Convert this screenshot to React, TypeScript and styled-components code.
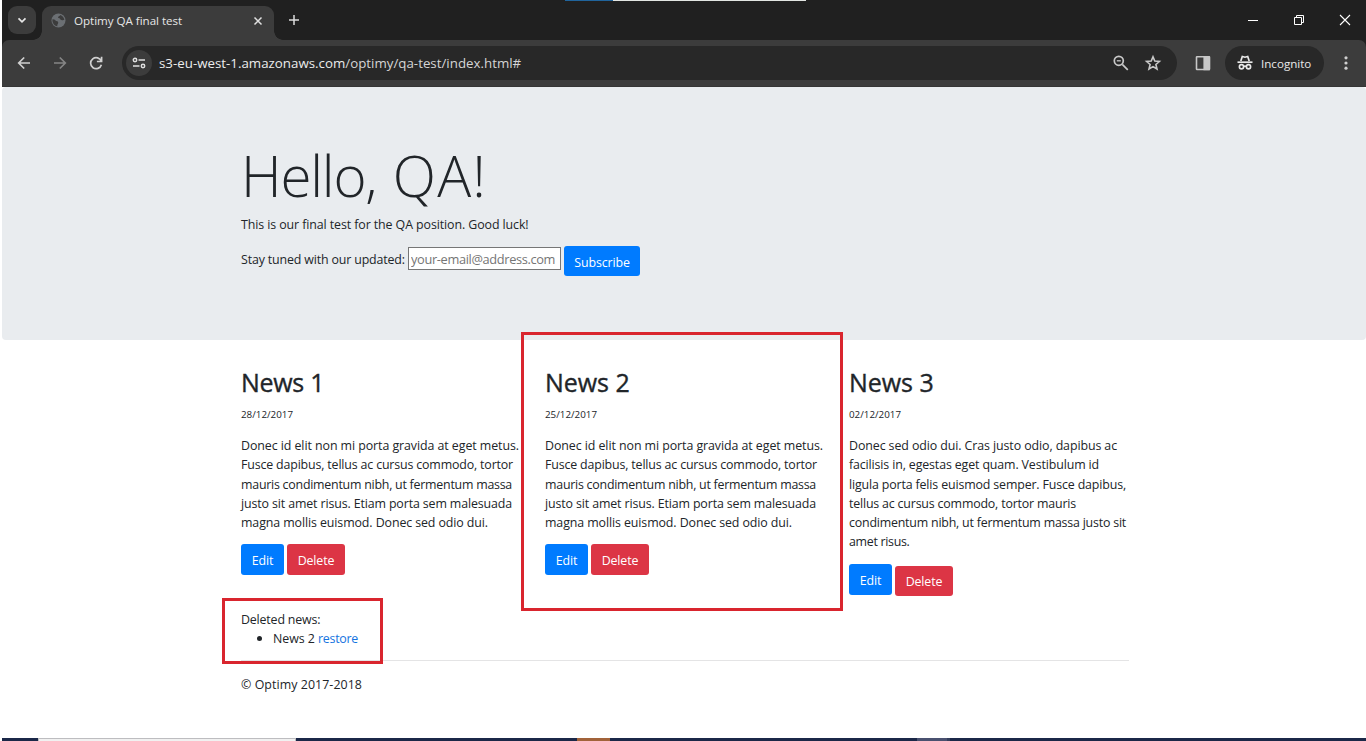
import React from "react";
import styled, { createGlobalStyle } from "styled-components";

const GlobalStyle = createGlobalStyle`
  *, *::before, *::after { box-sizing: border-box; }
  body { margin: 0; background: #fff; overflow: hidden; }
`;

const Screen = styled.div`
  position: relative;
  display: flex;
  flex-direction: column;
  width: 1366px;
  height: 741px;
  padding-left: 2px;
  overflow: hidden;
  background: #fff;
  color: #212529;
  font-family: "Segoe UI", "Open Sans", sans-serif;
  font-size: 12.4px;
`;

/* ---------- browser chrome ---------- */

const TabStrip = styled.header`
  position: relative;
  display: flex;
  flex: none;
  height: 40px;
  padding: 6px 0 0 6px;
  background: #202020;
`;

const BackgroundSliver = styled.div`
  position: absolute;
  top: 0;
  left: 563px;
  width: 241px;
  height: 1px;
  background: linear-gradient(to right, #20649c 48px, #e2e5e2 48px);
`;

const TabSearch = styled.div`
  display: grid;
  place-items: center;
  width: 28px;
  height: 28px;
  border-radius: 9px;
  background: #3c3c3c;
`;

const Tab = styled.div`
  position: relative;
  display: flex;
  align-items: center;
  width: 232px;
  height: 34px;
  margin-left: 6px;
  padding: 0 10px 5px 9px;
  border-radius: 9px 9px 0 0;
  background: #3c3c3c;
  color: #e6e6e6;

  &::before,
  &::after {
    content: "";
    position: absolute;
    bottom: 0;
    width: 9px;
    height: 9px;
  }
  &::before {
    left: -9px;
    background: radial-gradient(circle at 0 0, transparent 8.5px, #3c3c3c 9px);
  }
  &::after {
    right: -9px;
    background: radial-gradient(circle at 100% 0, transparent 8.5px, #3c3c3c 9px);
  }
`;

const TabTitle = styled.span`
  flex: 1;
  margin-left: 8px;
  font-size: 11.6px;
  line-height: 16px;
  letter-spacing: -0.03px;
  white-space: nowrap;
`;

const NewTab = styled.div`
  display: grid;
  place-items: center;
  width: 28px;
  height: 28px;
  margin-left: 6px;
`;

const WindowControls = styled.div`
  display: flex;
  flex: 1;
  justify-content: flex-end;
  align-items: center;
  height: 28px;
  gap: 30px;
  padding-right: 13px;
`;

const ToolbarBack = styled.div`
  flex: none;
  height: 47px;
  background: #202020;
`;

const Toolbar = styled.div`
  display: flex;
  align-items: center;
  height: 47px;
  padding: 0 10px 0 12px;
  border-radius: 7px 7px 0 0;
  border-bottom: 1px solid #353535;
  background: #3c3c3c;
`;

const NavIcons = styled.div`
  display: flex;
  gap: 16px;
  width: 108px;
`;

const Omnibox = styled.div`
  display: flex;
  align-items: center;
  width: 1055px;
  height: 34px;
  padding: 0 14px 0 4px;
  border-radius: 17px;
  background: #282828;
`;

const SiteInfo = styled.div`
  display: grid;
  place-items: center;
  width: 26px;
  height: 26px;
  border-radius: 50%;
  background: #3c3c3c;
`;

const Url = styled.span`
  flex: 1;
  margin-left: 7px;
  color: #d5d5d5;
  font-size: 13.3px;
  line-height: 20px;
  letter-spacing: 0.01px;
  white-space: nowrap;

  b {
    color: #ececec;
    font-weight: 400;
  }
`;

const OmniIcons = styled.div`
  display: flex;
  gap: 12px;
`;

const PanelIcon = styled.div`
  display: flex;
  width: 48px;
  padding-left: 16px;
`;

const Incognito = styled.div`
  display: flex;
  align-items: center;
  gap: 6px;
  width: 99px;
  height: 34px;
  padding-left: 10px;
  border-radius: 17px;
  background: #282828;
  color: #e8e8e8;
  font-size: 11.6px;
`;

const Menu = styled.div`
  display: flex;
  margin-left: 12px;
`;

/* ---------- web page ---------- */

const Jumbotron = styled.section`
  flex: none;
  height: 253px;
  padding: 54px 0 0 239px;
  border-radius: 4px;
  background: #e9ecef;
`;

const Display = styled.h1`
  margin: 0 0 4px;
  font-size: 56.5px;
  font-weight: 300;
  line-height: 70px;
  letter-spacing: 1.2px;
`;

const Greeting = styled.span`
  margin-right: 3px;
  letter-spacing: -1.2px;
`;

const Lead = styled.p`
  margin: 0 0 11px;
  line-height: 20px;
  letter-spacing: -0.09px;
`;

const SubscribeForm = styled.form`
  display: flex;
  height: 30px;
`;

const FormLabel = styled.label`
  width: 167px;
  line-height: 28px;
  letter-spacing: -0.15px;
`;

const EmailInput = styled.input`
  width: 153px;
  height: 23px;
  margin: 1px 3px 0 0;
  padding: 1px 2px 0;
  border: 1px solid #767676;
  border-radius: 0;
  background: #fff;
  font: 12.8px "Segoe UI", "Open Sans", sans-serif;
  letter-spacing: -0.35px;

  &::placeholder {
    color: #757575;
    opacity: 1;
  }
`;

const Button = styled.button<{ $tone: "primary" | "danger"; $width: number; $height?: number; $drop?: number }>`
  width: ${(p) => p.$width}px;
  height: ${(p) => p.$height ?? 31}px;
  margin: ${(p) => p.$drop ?? 0}px 0 0;
  padding: 2px 0 0;
  border: 0;
  border-radius: 3px;
  background: ${(p) => (p.$tone === "primary" ? "#007bff" : "#dc3545")};
  color: #fff;
  font: 12.4px "Segoe UI", "Open Sans", sans-serif;
  letter-spacing: -0.12px;
`;

const NewsRow = styled.main`
  display: flex;
  flex: none;
  height: 270px;
  padding: 26px 0 0 239px;
`;

const NewsItem = styled.article`
  width: 304px;
`;

const NewsTitle = styled.h2<{ $spacing?: number }>`
  margin: 0 0 7px;
  font-size: 25px;
  font-weight: 500;
  line-height: 32px;
  letter-spacing: ${(p) => p.$spacing ?? 0}px;
  -webkit-text-stroke: 0.35px currentColor;
`;

const NewsDate = styled.p`
  margin: 0 0 11.2px;
  font-size: 9.8px;
  line-height: 20px;
`;

const NewsText = styled.p`
  margin: 0 0 12.2px;
`;

const Line = styled.span<{ $spacing: number }>`
  display: block;
  height: 19.2px;
  line-height: 19.2px;
  letter-spacing: ${(p) => p.$spacing}px;
  white-space: nowrap;
`;

const Actions = styled.div`
  display: flex;
  align-items: flex-start;
  gap: 3px;
`;

const Deleted = styled.section`
  flex: none;
  width: 888px;
  height: 51px;
  margin-left: 239px;
  border-bottom: 1px solid #e4e4e5;
  line-height: 19px;
  letter-spacing: -0.17px;
`;

const DeletedList = styled.ul`
  margin: 0;
  padding-left: 16px;
  letter-spacing: -0.04px;
  list-style: none;
`;

const DeletedItem = styled.li`
  &::before {
    content: "";
    display: inline-block;
    width: 5px;
    height: 5px;
    margin-right: 11px;
    border-radius: 50%;
    background: #212529;
    vertical-align: 2px;
  }
`;

const Restore = styled.a`
  color: #1473e0;
  letter-spacing: -0.26px;
`;

const Footer = styled.footer`
  flex: 1;
  padding: 14px 0 0 239px;
  line-height: 20px;
  letter-spacing: 0.063px;
`;

const Taskbar = styled.div`
  display: flex;
  flex: none;
  height: 3px;
  background: #1b2848;
`;

const TaskSegment = styled.div<{ $width: number; $color: string; $edge?: string }>`
  width: ${(p) => p.$width}px;
  background: ${(p) => p.$color};
  ${(p) => p.$edge && `border: 1px solid ${p.$edge}; border-bottom: 0;`}
`;

const Highlight = styled.div<{ $x: number; $y: number; $w: number; $h: number }>`
  position: absolute;
  left: ${(p) => p.$x}px;
  top: ${(p) => p.$y}px;
  width: ${(p) => p.$w}px;
  height: ${(p) => p.$h}px;
  border: 3px solid #d9252e;
  pointer-events: none;
`;

/* ---------- icons ---------- */

type IconProps = { size?: number; color?: string; width?: number; children: React.ReactNode };

const Icon = ({ size = 20, color = "#d0d0d0", width = 1.7, children }: IconProps) => (
  <svg width={size} height={size} viewBox={`0 0 ${size} ${size}`} fill="none" stroke={color} strokeWidth={width}>
    {children}
  </svg>
);

const loremLines: [string, number][] = [
  ["Donec id elit non mi porta gravida at eget metus.", -0.068],
  ["Fusce dapibus, tellus ac cursus commodo, tortor", -0.158],
  ["mauris condimentum nibh, ut fermentum massa", -0.238],
  ["justo sit amet risus. Etiam porta sem malesuada", -0.125],
  ["magna mollis euismod. Donec sed odio dui.", -0.098],
];

const news: { title: string; spacing: number; date: string; lines: [string, number][] }[] = [
  { title: "News 1", spacing: -0.3, date: "28/12/2017", lines: loremLines },
  { title: "News 2", spacing: -0.05, date: "25/12/2017", lines: loremLines },
  {
    title: "News 3",
    spacing: -0.05,
    date: "02/12/2017",
    lines: [
      ["Donec sed odio dui. Cras justo odio, dapibus ac", -0.093],
      ["facilisis in, egestas eget quam. Vestibulum id", -0.131],
      ["ligula porta felis euismod semper. Fusce dapibus,", -0.146],
      ["tellus ac cursus commodo, tortor mauris", -0.18],
      ["condimentum nibh, ut fermentum massa justo sit", -0.203],
      ["amet risus.", -0.3],
    ],
  },
];

export default function App() {
  return (
    <Screen>
      <GlobalStyle />
      <TabStrip>
        <BackgroundSliver />
        <TabSearch>
          <Icon size={12} color="#e6e6e6">
            <path d="M2.5 4.3 6 7.8l3.5-3.5" />
          </Icon>
        </TabSearch>
        <Tab>
          <Icon size={15} color="none">
            <circle cx="7.5" cy="7.5" r="7" fill="#6b6f73" />
            <path
              d="M1.5 6.2C3.2 6 4.6 6.8 5 8.1c1.4-.2 2.4.6 2.2 1.9-.2 1-1 1.200-.9 3.200C3 12.600 1 9.600 1.500 6.200ZM9.200 1.900c-.3 1.300-1.400 1-2 1.900-.5.8.1 1.300 1.100 1.400 1 .2.9 1.600 2 1.900 1.200.3 1.600-.4 3-.1C13.300 4.700 11.500 2.500 9.200 1.900Z"
              fill="#3c3c3c"
            />
          </Icon>
          <TabTitle>Optimy QA final test</TabTitle>
          <Icon size={12} color="#e0e0e0" width={1.5}>
            <path d="m2.500 2.500 7 7m0-7-7 7" />
          </Icon>
        </Tab>
        <NewTab>
          <Icon size={12} color="#dcdcdc" width={1.5}>
            <path d="M6 1v10M1 6h10" />
          </Icon>
        </NewTab>
        <WindowControls>
          <Icon size={16} color="#fff" width={1}>
            <path d="M3 8.500h10" />
          </Icon>
          <Icon size={16} color="#fff" width={1}>
            <path d="M3.500 5.500h7v7h-7zM5.500 5.500v-2h7v7h-2" />
          </Icon>
          <Icon size={16} color="#fff" width={1.1}>
            <path d="m3 3 10 10m0-10L3 13" />
          </Icon>
        </WindowControls>
      </TabStrip>

      <ToolbarBack>
        <Toolbar>
          <NavIcons>
            <Icon>
              <path d="M16 10H5m5.200-5.500L4.700 10l5.500 5.500" />
            </Icon>
            <Icon color="#858585">
              <path d="M4 10h11m-5.200-5.500 5.500 5.500-5.500 5.500" />
            </Icon>
            <Icon>
              <path d="M15.300 8.300A5.500 5.500 0 1 0 15.400 11.700M15.600 3.800v4.700h-4.700" />
            </Icon>
          </NavIcons>
          <Omnibox>
            <SiteInfo>
              <Icon size={16} color="#e0e0e0" width={1.5}>
                <circle cx="4" cy="5" r="1.700" />
                <path d="M7.500 5H14M2 11h6.500" />
                <circle cx="12" cy="11" r="1.700" />
              </Icon>
            </SiteInfo>
            <Url>
              <b>s3-eu-west-1.amazonaws.com</b>/optimy/qa-test/index.html#
            </Url>
            <OmniIcons>
              <Icon color="#c8c8c8" width={1.7}>
                <circle cx="7.800" cy="7.800" r="4.500" />
                <path d="m11.300 11.300 5.500 5.500" />
                <path d="M5.800 7.800h4" strokeWidth="1.300" />
              </Icon>
              <Icon color="#c8c8c8" width={1.6}>
                <path d="m10 3.900 1.800 4.200 4.600.4-3.500 3 1.100 4.500-4-2.400L6 16l1.100-4.500-3.500-3 4.600-.4Z" />
              </Icon>
            </OmniIcons>
          </Omnibox>
          <PanelIcon>
            <Icon color="#c8c8c8" width={1.6}>
              <rect x="3.500" y="3.800" width="13" height="12.700" rx=".5" />
              <path d="M11.200 4h5v12.500h-5z" fill="#c8c8c8" />
            </Icon>
          </PanelIcon>
          <Incognito>
            <Icon color="#e8e8e8" width={1.7}>
              <path d="m5.800 8 1.500-4.500 2.700.7 2.700-.7L14.200 8" />
              <path d="M2.500 9.200h15" />
              <circle cx="6.500" cy="13.800" r="2.100" />
              <circle cx="13.500" cy="13.800" r="2.100" />
              <path d="M8.500 13.600q1.500-1 3 0" />
            </Icon>
            Incognito
          </Incognito>
          <Menu>
            <Icon color="none">
              <g fill="#d0d0d0">
                <circle cx="10" cy="4.800" r="1.600" />
                <circle cx="10" cy="10" r="1.600" />
                <circle cx="10" cy="15.200" r="1.600" />
              </g>
            </Icon>
          </Menu>
        </Toolbar>
      </ToolbarBack>

      <Jumbotron>
        <Display>
          <Greeting>Hello, </Greeting>QA!
        </Display>
        <Lead>This is our final test for the QA position. Good luck!</Lead>
        <SubscribeForm>
          <FormLabel>Stay tuned with our updated:</FormLabel>
          <EmailInput placeholder="your-email@address.com" />
          <Button type="button" $tone="primary" $width={76} $height={30}>
            Subscribe
          </Button>
        </SubscribeForm>
      </Jumbotron>

      <NewsRow>
        {news.map((item, index) => (
          <NewsItem key={item.title}>
            <NewsTitle $spacing={item.spacing}>{item.title}</NewsTitle>
            <NewsDate>{item.date}</NewsDate>
            <NewsText>
              {item.lines.map(([text, spacing]) => (
                <Line key={text} $spacing={spacing}>
                  {text}
                </Line>
              ))}
            </NewsText>
            <Actions>
              <Button $tone="primary" $width={43}>
                Edit
              </Button>
              <Button $tone="danger" $width={58} $height={index === 2 ? 30 : 31} $drop={index === 2 ? 2 : 0}>
                Delete
              </Button>
            </Actions>
          </NewsItem>
        ))}
      </NewsRow>

      <Deleted>
        Deleted news:
        <DeletedList>
          <DeletedItem>
            News 2 <Restore>restore</Restore>
          </DeletedItem>
        </DeletedList>
      </Deleted>
      <Footer>© Optimy 2017-2018</Footer>

      <Taskbar>
        <TaskSegment $width={36} $color="#1b2848" />
        <TaskSegment $width={258} $color="#f1f1f1" $edge="#bdbdc0" />
        <TaskSegment $width={281} $color="#1b2848" />
        <TaskSegment $width={33} $color="#a2633a" />
        <TaskSegment $width={307} $color="#1b2848" />
        <TaskSegment $width={30} $color="#4a5170" />
        <TaskSegment $width={3} $color="#343e5c" />
      </Taskbar>

      <Highlight $x={521} $y={332} $w={322} $h={279} />
      <Highlight $x={222} $y={598} $w={161} $h={66} />
    </Screen>
  );
}
